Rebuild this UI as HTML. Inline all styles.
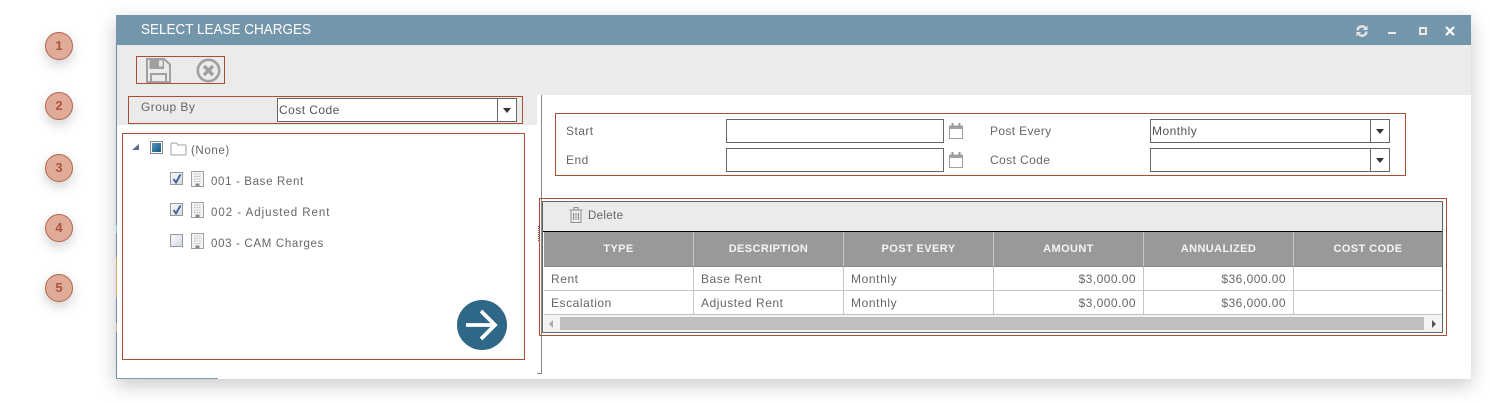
<!DOCTYPE html>
<html><head><meta charset="utf-8">
<style>
html,body{margin:0;padding:0;background:#fff}
#p{position:relative;width:1490px;height:403px;overflow:hidden;background:#fff;font-family:"Liberation Sans",sans-serif}
#p div,#p span.t{position:absolute;box-sizing:border-box}
.t{white-space:nowrap;font-size:12px;letter-spacing:.45px;color:#666;line-height:14px}
.b{position:absolute;border:1px solid #a94f33}
.n{left:45px;width:28px;height:28px;border-radius:50%;background:#e0ab99;border:1px solid #b4654b;box-shadow:0 5px 12px rgba(0,0,0,.18);color:#a9543a;font:bold 13px/26px "Liberation Sans",sans-serif;text-align:center}
.i{border:1px solid #666;background:#fff}
.dd{border-left:1px solid #666;top:0;bottom:0;right:0;width:19px}
.dd:after{content:"";position:absolute;left:5px;top:9px;border:4px solid transparent;border-top:5px solid #333;border-bottom:0}
.th{top:232px;height:35px;background:#999;color:#f4f4f4;font-size:11px;font-weight:bold;letter-spacing:.4px;line-height:35px;text-align:center;border-right:1px solid #c8c8c8;border-bottom:1px solid #8a8a8a}
.td{height:24px;border-right:1px solid #c4c4c4;border-bottom:1px solid #c4c4c4;font-size:12px;letter-spacing:.55px;line-height:24px;padding:0 7px;color:#666;white-space:nowrap}
.r{text-align:right}
.c{left:170px;width:13px;height:13px;border:1px solid #999;background:linear-gradient(135deg,#f8f8fa,#d5dae3)}
svg{position:absolute;overflow:visible}
</style></head><body><div id="p">

<div class="n" style="top:32px">1</div>
<div class="n" style="top:92px">2</div>
<div class="n" style="top:154px">3</div>
<div class="n" style="top:214px">4</div>
<div class="n" style="top:274px">5</div>

<!-- window -->
<div style="left:116px;top:15px;width:1355px;height:364px;background:#fff;box-shadow:0 6px 18px rgba(0,0,0,.22)"></div>
<div style="left:116px;top:45px;width:1px;height:334px;background:#6b8da6"></div>
<div style="left:116px;top:225px;width:1px;height:8px;background:#8fd0dc"></div>
<div style="left:116px;top:257px;width:1px;height:40px;background:#dba966"></div>
<div style="left:116px;top:323px;width:1px;height:9px;background:#c9b8a0"></div>
<div style="left:116px;top:378px;width:102px;height:1px;background:#7f9aae"></div>
<div style="left:116px;top:15px;width:1355px;height:30px;background:#7396ab"></div>
<span class="t" style="left:141px;top:21px;font-size:15px;line-height:18px;letter-spacing:0;color:#fff;transform:scaleX(.9);transform-origin:0 0">SELECT LEASE CHARGES</span>

<svg style="left:1356px;top:25px" width="12" height="12" viewBox="0 0 12 12"><path d="M1.500 5.500A4.500 4.500 0 0 1 9 2.500M10.500 6.500A4.500 4.500 0 0 1 3 9.500" fill="none" stroke="#e4e4e4" stroke-width="2.400"/><path d="M6.500 5H11.500V.5zM5.500 7H.5V11.500z" fill="#e4e4e4"/></svg>
<div style="left:1388px;top:32px;width:8px;height:2px;background:#eee"></div>
<div style="left:1419px;top:27px;width:8px;height:8px;border:2px solid #eaeaea"></div>
<svg style="left:1445px;top:26px" width="10" height="10" viewBox="0 0 10 10"><path d="M1 1L9 9M9 1L1 9" stroke="#fff" stroke-width="2.200"/></svg>

<!-- toolbar -->
<div style="left:117px;top:45px;width:1354px;height:50px;background:#ebebeb"></div>
<div style="left:117px;top:95px;width:420px;height:30px;background:#ebebeb"></div>
<div class="b" style="left:136px;top:56px;width:89px;height:28px"></div>
<svg style="left:146px;top:58px" width="25" height="25" viewBox="0 0 25 25"><path d="M1 1H18L24 6.500V24H1Z" fill="none" stroke="#a0a0a0" stroke-width="2"/><path d="M3.500 1H18V11H3.500Z" fill="#a0a0a0"/><rect x="13" y="2.500" width="3.500" height="6" fill="#ebebeb"/><path d="M5 24V16H20V24" fill="none" stroke="#a0a0a0" stroke-width="2"/></svg>
<svg style="left:195.500px;top:58px" width="25" height="25" viewBox="0 0 25 25"><circle cx="12.500" cy="12.500" r="10.700" fill="none" stroke="#a0a0a0" stroke-width="2.600"/><path d="M8 8L17 17M17 8L8 17" stroke="#a0a0a0" stroke-width="3.400"/></svg>

<!-- group by -->
<div class="b" style="left:128px;top:96px;width:395px;height:28px"></div>
<span class="t" style="left:141px;top:100px">Group By</span>
<div class="i" style="left:277px;top:98px;width:240px;height:24px"><div class="dd"></div></div>
<span class="t" style="left:279px;top:103px;color:#555">Cost Code</span>

<!-- tree -->
<div class="b" style="left:122px;top:133px;width:403px;height:227px"></div>
<svg style="left:132px;top:144px" width="8" height="7" viewBox="0 0 8 7"><path d="M7 0V6H0Z" fill="#5f6a85"/></svg>
<div style="left:150px;top:141px;width:13px;height:13px;border:1px solid #888;background:#fff"></div>
<div style="left:152px;top:143px;width:9px;height:9px;background:linear-gradient(135deg,#4f9ac6,#14597f)"></div>
<svg style="left:170px;top:142px" width="17" height="14" viewBox="0 0 17 14"><path d="M1 12V2.500Q1 1 2.500 1H6.500L8 3H15Q16 3 16 4V12Q16 13 15 13H2Q1 13 1 12Z" fill="#fff" stroke="#a0a0a0"/></svg>
<span class="t" style="left:191px;top:144px;font-size:11.5px;letter-spacing:.6px">(None)</span>

<div class="c" style="top:172px"></div>
<svg style="left:172px;top:174px" width="10" height="10" viewBox="0 0 10 10"><path d="M1.500 5L4 8.500L8.500 .5" fill="none" stroke="#3e5e94" stroke-width="1.800"/></svg>
<div class="c" style="top:203px"></div>
<svg style="left:172px;top:205px" width="10" height="10" viewBox="0 0 10 10"><path d="M1.500 5L4 8.500L8.500 .5" fill="none" stroke="#3e5e94" stroke-width="1.800"/></svg>
<div class="c" style="top:234px"></div>

<svg style="left:191px;top:171px" width="13" height="16" viewBox="0 0 13 16"><path d="M.5.5H12.500V15.500H.5Z" fill="#f4f4f4" stroke="#a0a0a0"/><path d="M3 3H10M3 5.500H10M3 8H10M3 10.500H10" stroke="#bbb" stroke-dasharray="1.500 1"/><rect x="4.500" y="12.500" width="4" height="3" fill="#888"/></svg>
<svg style="left:191px;top:202px" width="13" height="16" viewBox="0 0 13 16"><path d="M.5.5H12.500V15.500H.5Z" fill="#f4f4f4" stroke="#a0a0a0"/><path d="M3 3H10M3 5.500H10M3 8H10M3 10.500H10" stroke="#bbb" stroke-dasharray="1.500 1"/><rect x="4.500" y="12.500" width="4" height="3" fill="#888"/></svg>
<svg style="left:191px;top:233px" width="13" height="16" viewBox="0 0 13 16"><path d="M.5.5H12.500V15.500H.5Z" fill="#f4f4f4" stroke="#a0a0a0"/><path d="M3 3H10M3 5.500H10M3 8H10M3 10.500H10" stroke="#bbb" stroke-dasharray="1.500 1"/><rect x="4.500" y="12.500" width="4" height="3" fill="#888"/></svg>
<span class="t" style="left:211px;top:175px;font-size:11.5px;letter-spacing:.65px">001 - Base Rent</span>
<span class="t" style="left:211px;top:206px;font-size:11.5px;letter-spacing:.97px">002 - Adjusted Rent</span>
<span class="t" style="left:211px;top:237px;font-size:11.5px;letter-spacing:.67px">003 - CAM Charges</span>

<svg style="left:457px;top:300px" width="50" height="50" viewBox="0 0 50 50"><circle cx="25" cy="25" r="25" fill="#2f6787"/><path d="M9 25H38M24 11L38 25L24 39" fill="none" stroke="#fff" stroke-width="3.800"/></svg>

<!-- splitter -->
<div style="left:541px;top:95px;width:1px;height:279px;background:#888"></div>
<div style="left:537px;top:373px;width:5px;height:1px;background:#888"></div>
<div style="left:538px;top:226px;width:2px;height:16px;background:repeating-linear-gradient(#5c6f8c 0 1px,#fff 1px 2px)"></div>

<!-- form -->
<div class="b" style="left:555px;top:113px;width:851px;height:63px"></div>
<span class="t" style="left:566px;top:124px">Start</span>
<span class="t" style="left:566px;top:153px">End</span>
<div class="i" style="left:726px;top:119px;width:218px;height:24px"></div>
<div class="i" style="left:726px;top:148px;width:218px;height:24px"></div>
<svg style="left:948px;top:123px" width="16" height="16" viewBox="0 0 16 16"><path d="M1.500 3H14.500V15.500H1.500Z" fill="#fff" stroke="#a0a0a0"/><rect x="1.500" y="3" width="13" height="3" fill="#a0a0a0"/><path d="M4.500 0V4M11.500 0V4" stroke="#999" stroke-width="2"/></svg>
<svg style="left:948px;top:152px" width="16" height="16" viewBox="0 0 16 16"><path d="M1.500 3H14.500V15.500H1.500Z" fill="#fff" stroke="#a0a0a0"/><rect x="1.500" y="3" width="13" height="3" fill="#a0a0a0"/><path d="M4.500 0V4M11.500 0V4" stroke="#999" stroke-width="2"/></svg>
<span class="t" style="left:990px;top:124px;letter-spacing:.35px">Post Every</span>
<span class="t" style="left:990px;top:153px;letter-spacing:.4px">Cost Code</span>
<div class="i" style="left:1150px;top:119px;width:240px;height:24px"><div class="dd"></div></div>
<div class="i" style="left:1150px;top:148px;width:240px;height:24px"><div class="dd"></div></div>
<span class="t" style="left:1152px;top:124px;color:#555">Monthly</span>

<!-- grid -->
<div class="b" style="left:539px;top:198px;width:908px;height:138px"></div>
<div style="left:542px;top:201px;width:901px;height:132px;border:1px solid #666;background:#fff"></div>
<div style="left:543px;top:202px;width:899px;height:29px;background:#ebebeb"></div>
<div style="left:543px;top:231px;width:899px;height:1px;background:#000"></div>
<svg style="left:569px;top:207px" width="14" height="16" viewBox="0 0 14 16"><path d="M.5 3H13.500M5 3V.5H9V3" fill="none" stroke="#8f8f8f"/><path d="M2 3.500V15.500H12V3.500" fill="none" stroke="#8f8f8f"/><path d="M4.500 6V13M7 6V13M9.500 6V13" stroke="#888"/></svg>
<span class="t" style="left:588px;top:209px;font-size:11.5px;letter-spacing:.35px">Delete</span>

<div class="th" style="left:544px;width:150px">TYPE</div>
<div class="th" style="left:694px;width:150px">DESCRIPTION</div>
<div class="th" style="left:844px;width:150px">POST EVERY</div>
<div class="th" style="left:994px;width:150px">AMOUNT</div>
<div class="th" style="left:1144px;width:150px">ANNUALIZED</div>
<div class="th" style="left:1294px;width:148px;border-right:0">COST CODE</div>

<div class="td" style="left:544px;top:267px;width:150px">Rent</div>
<div class="td" style="left:694px;top:267px;width:150px">Base Rent</div>
<div class="td" style="left:844px;top:267px;width:150px;letter-spacing:.6px">Monthly</div>
<div class="td r" style="left:994px;top:267px;width:150px;letter-spacing:.45px">$3,000.00</div>
<div class="td r" style="left:1144px;top:267px;width:150px;letter-spacing:.45px">$36,000.00</div>
<div class="td" style="left:1294px;top:267px;width:148px;border-right:0"></div>
<div class="td" style="left:544px;top:291px;width:150px">Escalation</div>
<div class="td" style="left:694px;top:291px;width:150px">Adjusted Rent</div>
<div class="td" style="left:844px;top:291px;width:150px;letter-spacing:.6px">Monthly</div>
<div class="td r" style="left:994px;top:291px;width:150px;letter-spacing:.45px">$3,000.00</div>
<div class="td r" style="left:1144px;top:291px;width:150px;letter-spacing:.45px">$36,000.00</div>
<div class="td" style="left:1294px;top:291px;width:148px;border-right:0"></div>

<div style="left:544px;top:315px;width:898px;height:17px;background:#f3f3f3"></div>
<div style="left:560px;top:317px;width:864px;height:13px;background:#bfbfbf"></div>
<svg style="left:549px;top:320px" width="5" height="8" viewBox="0 0 5 8"><path d="M4 0V8L0 4Z" fill="#aaa"/></svg>
<svg style="left:1432px;top:320px" width="5" height="8" viewBox="0 0 5 8"><path d="M0 0V8L4 4Z" fill="#555"/></svg>

</div></body></html>
